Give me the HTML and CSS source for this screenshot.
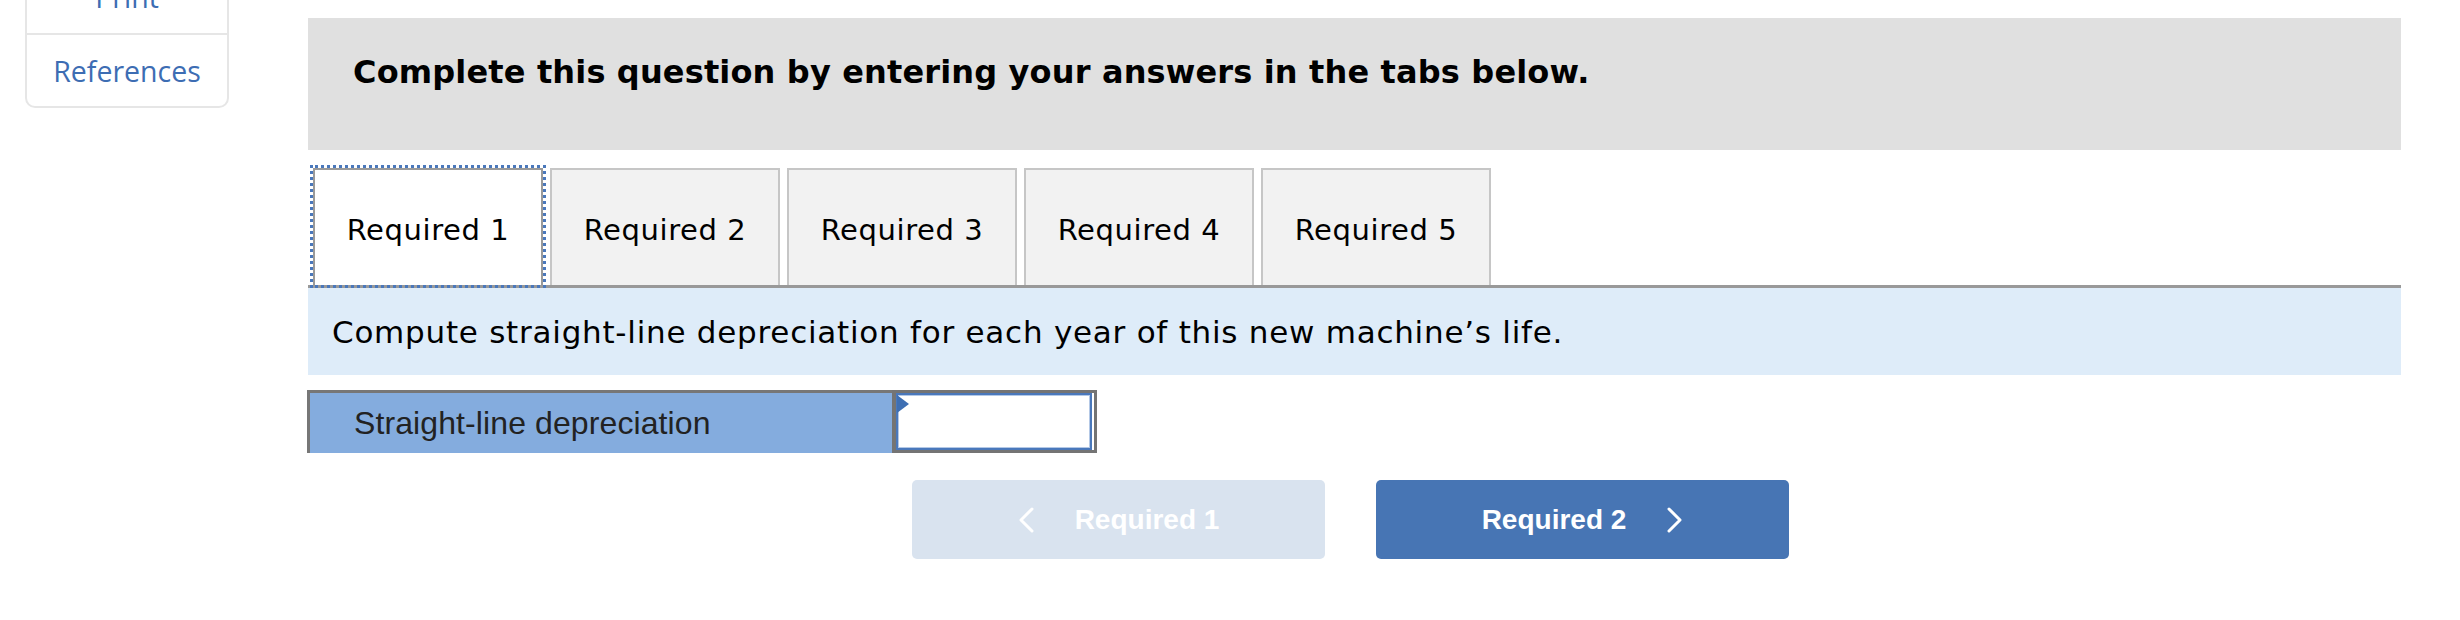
FILE: index.html
```html
<!DOCTYPE html>
<html lang="en">
<head>
<meta charset="utf-8">
<title>Required 1</title>
<link rel="stylesheet" href="styles.css">
</head>
<body>
<div class="page">
  <aside class="sidebar">
    <div class="side-card">
      <div class="side-item">Print</div>
      <div class="side-item">References</div>
    </div>
  </aside>
  <main class="main">
    <div class="instruction">Complete this question by entering your answers in the tabs below.</div>
    <div class="tabs">
      <div class="tab active">Required 1</div>
      <div class="tab">Required 2</div>
      <div class="tab">Required 3</div>
      <div class="tab">Required 4</div>
      <div class="tab">Required 5</div>
    </div>
    <div class="prompt">Compute straight-line depreciation for each year of this new machine’s life.</div>
    <div class="answer-row">
      <div class="answer-label">Straight-line depreciation</div>
      <div class="answer-cell"><div class="answer-field"></div></div>
    </div>
    <div class="nav">
      <button class="btn btn-prev">
        <svg class="chev" width="16" height="26" viewBox="0 0 16 26"><path d="M14 2 L3 13 L14 24" fill="none" stroke="#fff" stroke-width="3" stroke-linecap="round" stroke-linejoin="round"/></svg>
        <span>Required 1</span>
      </button>
      <button class="btn btn-next">
        <span>Required 2</span>
        <svg class="chev" width="16" height="26" viewBox="0 0 16 26"><path d="M2 2 L13 13 L2 24" fill="none" stroke="#fff" stroke-width="3" stroke-linecap="round" stroke-linejoin="round"/></svg>
      </button>
    </div>
  </main>
</div>
</body>
</html>
```
FILE: styles.css
```css
html, body {
  margin: 0;
  padding: 0;
  background: #fff;
}

.page {
  display: flex;
  align-items: flex-start;
}

.sidebar {
  width: 204px;
  margin-left: 25px;
  margin-top: -41px;
  flex: none;
}

.side-card {
  border: 2px solid #e6e6e6;
  border-radius: 0 0 10px 10px;
  box-sizing: border-box;
}

.side-item {
  height: 72px;
  display: flex;
  align-items: center;
  justify-content: center;
  font-family: "Open Sans", "Liberation Sans", sans-serif;
  font-size: 28.5px;
  color: #3d6db3;
}

.side-item + .side-item {
  border-top: 2px solid #e6e6e6;
  height: 71px;
}

.main {
  flex: 1;
  margin-left: 79px;
  margin-right: 59px;
  padding-top: 18px;
  font-family: "DejaVu Sans", Verdana, sans-serif;
  color: #000;
}

.instruction {
  height: 132px;
  box-sizing: border-box;
  background: #e0e0e0;
  padding: 33px 0 0 45px;
  font-weight: bold;
  font-size: 32px;
  line-height: 42px;
  letter-spacing: 0.15px;
}

.tabs {
  display: flex;
  gap: 7px;
  margin-top: 18px;
  padding-left: 5px;
  border-bottom: 3px solid #999;
}

.tab {
  width: 230px;
  height: 117px;
  box-sizing: border-box;
  border: 2px solid #c6c6c6;
  border-bottom: none;
  background: #f2f2f2;
  display: flex;
  align-items: center;
  justify-content: center;
  padding-top: 4px;
  font-size: 29px;
  letter-spacing: 0.6px;
}

.tab.active {
  background: #fff;
  border-color: #9a9a9a;
  outline: 3px dotted #4a78bb;
}

.prompt {
  height: 87px;
  box-sizing: border-box;
  background: #deecf9;
  padding: 0 0 0 24px;
  display: flex;
  align-items: center;
  font-size: 31px;
  letter-spacing: 0.75px;
}

.answer-row {
  display: flex;
  width: 790px;
  height: 63px;
  margin-top: 15px;
  margin-left: -1px;
}

.answer-label {
  width: 585px;
  box-sizing: border-box;
  background: #84acde;
  border-top: 3px solid #777;
  border-left: 3px solid #777;
  padding-left: 44px;
  display: flex;
  align-items: center;
  font-family: "Liberation Sans", Arial, sans-serif;
  font-size: 32px;
  letter-spacing: 0.1px;
  color: #222;
}

.answer-cell {
  width: 205px;
  box-sizing: border-box;
  border: 3px solid #747474;
  border-left-width: 4px;
  padding-right: 2px;
  background: #fff;
}

.answer-field {
  position: relative;
  height: 100%;
  box-sizing: border-box;
  border: 2px solid #4a78bb;
  box-shadow: inset 0 0 0 1px #b3c8e6;
}

.answer-field::before {
  content: "";
  position: absolute;
  left: -1px;
  top: 0;
  border-left: 12px solid #3e6fb3;
  border-top: 9px solid transparent;
  border-bottom: 9px solid transparent;
}

.nav {
  display: flex;
  gap: 51px;
  margin-top: 27px;
  padding-left: 604px;
}

.btn {
  width: 413px;
  height: 79px;
  border: none;
  border-radius: 5px;
  display: flex;
  align-items: center;
  justify-content: center;
  gap: 41px;
  padding: 0;
  font-family: "Liberation Sans", Arial, sans-serif;
  font-weight: bold;
  font-size: 28px;
  color: #fff;
}

.btn-prev {
  background: #d9e3ef;
}

.btn-next {
  background: #4775b4;
}

.chev {
  display: block;
  flex: none;
}
```
